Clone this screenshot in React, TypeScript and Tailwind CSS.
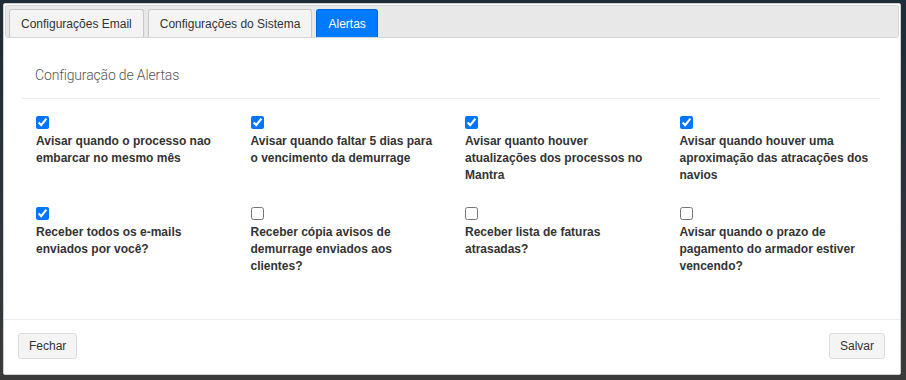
const alerts = [
  { label: 'Avisar quando o processo nao embarcar no mesmo mês', checked: true },
  { label: 'Avisar quando faltar 5 dias para o vencimento da demurrage', checked: true },
  { label: 'Avisar quanto houver atualizações dos processos no Mantra', checked: true },
  { label: 'Avisar quando houver uma aproximação das atracações dos navios', checked: true },
  { label: 'Receber todos os e-mails enviados por você?', checked: true },
  { label: 'Receber cópia avisos de demurrage enviados aos clientes?', checked: false },
  { label: 'Receber lista de faturas atrasadas?', checked: false },
  { label: 'Avisar quando o prazo de pagamento do armador estiver vencendo?', checked: false },
]

const tabs = ['Configurações Email', 'Configurações do Sistema', 'Alertas']

export default function App() {
  return (
    <div className="w-[906px] h-[380px] overflow-hidden bg-gradient-to-b from-[#1c2c38] to-[#3a3a3a] pt-[3px] pl-[3px] font-['Liberation_Sans',Arial,sans-serif] text-[12px] text-[#333]">
      <div className="w-[898px] h-[372px] bg-white border border-[#cfcfcf] rounded-[2px] flex flex-col">
        {/* Tabs */}
        <div className="mx-[1px] mt-[1px] h-[33px] bg-[#e8e8e8] border border-[#d6d6d6] rounded-[3px] flex items-end gap-[4px] px-[3px]">
          {tabs.map((tab) => {
            const active = tab === 'Alertas'
            return (
              <div
                key={tab}
                className={
                  active
                    ? 'h-[28px] px-[11px] flex items-center bg-[#007bff] border border-b-0 border-[#0069d9] rounded-t-[3px] text-white'
                    : 'h-[28px] px-[11px] flex items-center bg-[#f4f4f4] border border-b-0 border-[#c8c8c8] rounded-t-[3px] text-[#333]'
                }
              >
                {tab}
              </div>
            )
          })}
        </div>

        {/* Body */}
        <div className="flex-1 px-[18px]">
          <h4 className="mt-[27px] pl-[13px] h-[20px] leading-[20px] text-[14px] tracking-[-0.15px] font-light text-[#555] font-['Roboto',sans-serif]">
            Configuração de Alertas
          </h4>
          <div className="mt-[13px] w-[858px] border-t border-[#eeeeee]" />

          <div className="mt-[17px] ml-[14px] w-[858px] grid grid-cols-4 gap-y-[23px]">
            {alerts.map((a) => (
              <label key={a.label} className="block pr-[24px]">
                <input type="checkbox" defaultChecked={a.checked} className="block m-0 w-[13px] h-[13px]" />
                <span className="block mt-[4px] font-bold leading-[17px]">{a.label}</span>
              </label>
            ))}
          </div>
        </div>

        {/* Footer */}
        <div className="h-[55px] border-t border-[#eeeeee] flex items-start justify-between pl-[14px] pr-[15px] pt-[13px]">
          <button className="h-[26px] px-[10px] bg-[#f4f4f4] border border-[#dcdcdc] rounded-[3px] text-[#333]">
            Fechar
          </button>
          <button className="h-[26px] px-[10px] bg-[#f4f4f4] border border-[#dcdcdc] rounded-[3px] text-[#333]">
            Salvar
          </button>
        </div>
      </div>
    </div>
  )
}
